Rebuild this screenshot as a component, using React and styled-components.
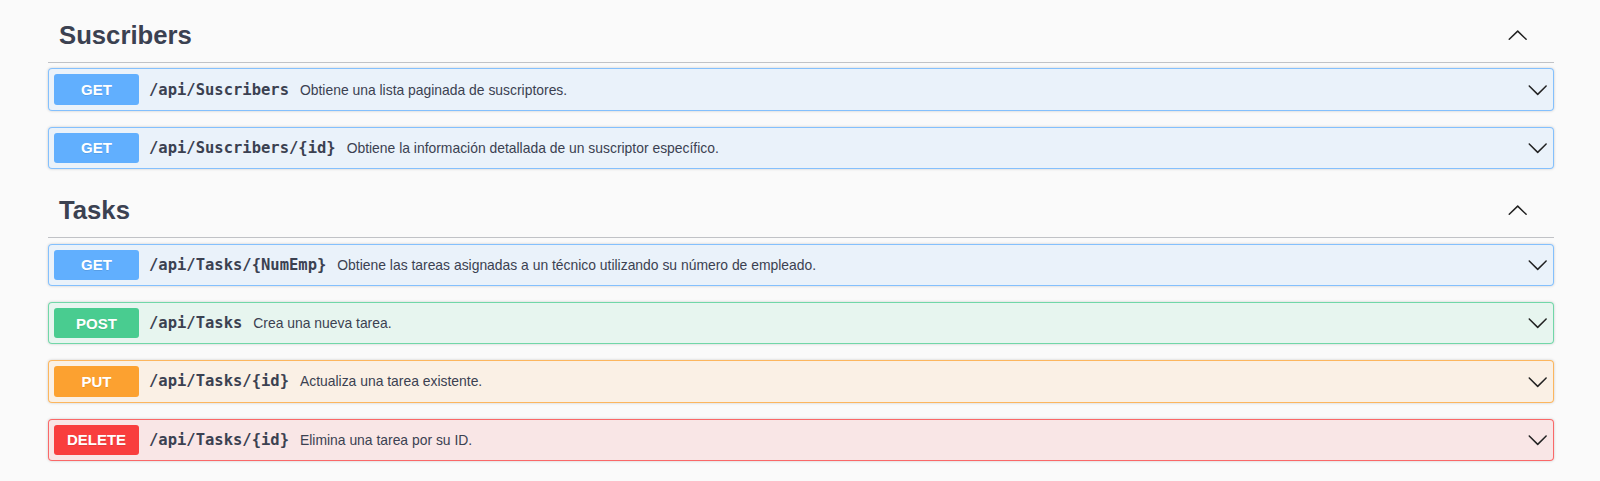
import React from "react";
import styled, { createGlobalStyle } from "styled-components";

const Global = createGlobalStyle`
  html, body { margin: 0; padding: 0; background: #fafafa; }
  body { font-family: "Liberation Sans", Arial, sans-serif; color: #3b4151; }
`;

const METHODS = {
  get: { main: "#61affe", border: "rgba(97,175,254,.75)", bg: "rgba(97,175,254,.1)" },
  post: { main: "#49cc90", border: "rgba(73,204,144,.75)", bg: "rgba(73,204,144,.1)" },
  put: { main: "#fca130", border: "rgba(252,161,48,.75)", bg: "rgba(252,161,48,.1)" },
  delete: { main: "#f93e3e", border: "rgba(249,62,62,.75)", bg: "rgba(249,62,62,.1)" },
};

const Page = styled.div`
  padding: 9.5px 46px 20px 48px;
`;

const Section = styled.section`
  margin-bottom: 0;
`;

const TagHeader = styled.div`
  display: flex;
  align-items: center;
  height: 33px;
  padding: 9.7px 20px 9.7px 10px;
  margin: 0 0 5.4px;
  border-bottom: 1px solid rgba(59, 65, 81, 0.3);
`;

const TagTitle = styled.h3`
  flex: 1;
  margin: 0;
  padding-left: 1px;
  font-family: "Liberation Sans", Arial, sans-serif;
  font-size: 25.7px;
  font-weight: 700;
  color: #3b4151;
  line-height: 1;
`;

const ExpandButton = styled.button`
  border: none;
  background: none;
  padding: 1px 6px;
  display: flex;
  align-items: center;
  color: #222;
  cursor: pointer;
`;

const Block = styled.div`
  display: flex;
  align-items: center;
  margin: 0 0 15.8px;
  padding: 5px;
  border: 1px solid ${(p) => METHODS[p.$m].border};
  border-radius: 4px;
  background: ${(p) => METHODS[p.$m].bg};
  box-shadow: 0 0 3px rgba(0, 0, 0, 0.19);
`;

const Method = styled.span`
  min-width: 85px;
  height: 30.5px;
  display: flex;
  align-items: center;
  justify-content: center;
  border-radius: 3px;
  background: ${(p) => METHODS[p.$m].main};
  color: #fff;
  font-family: "Liberation Sans", Arial, sans-serif;
  font-size: 15px;
  font-weight: 700;
  text-shadow: 0 1px 0 rgba(0, 0, 0, 0.1);
`;

const Path = styled.span`
  padding: 0 11px 0 10px;
  font-family: "DejaVu Sans Mono", monospace;
  font-size: 15.5px;
  font-weight: 700;
  color: #3b4151;
  white-space: nowrap;
`;

const Description = styled.span`
  flex: 1;
  font-family: "Liberation Sans", Arial, sans-serif;
  font-size: 13.9px;
  color: #3b4151;
`;

const ArrowButton = styled.button`
  border: none;
  background: none;
  padding: 0;
  display: flex;
  align-items: center;
  color: #222;
`;

const Chevron = ({ up }) => (
  <svg
    width="21.4"
    height="21.4"
    viewBox="0 0 20 20"
    fill="currentColor"
    style={up ? { transform: "rotate(180deg)" } : undefined}
  >
    <path d="M17.418 6.109c.272-.268.709-.268.979 0s.271.701 0 .969l-7.908 7.83c-.27.268-.707.268-.979 0l-7.908-7.83c-.27-.268-.27-.701 0-.969.271-.268.709-.268.979 0L10 13.25l7.418-7.141z" />
  </svg>
);

const sections = [
  {
    name: "Suscribers",
    ops: [
      { m: "get", path: "/api/Suscribers", desc: "Obtiene una lista paginada de suscriptores." },
      { m: "get", path: "/api/Suscribers/{id}", desc: "Obtiene la información detallada de un suscriptor específico." },
    ],
  },
  {
    name: "Tasks",
    ops: [
      { m: "get", path: "/api/Tasks/{NumEmp}", desc: "Obtiene las tareas asignadas a un técnico utilizando su número de empleado." },
      { m: "post", path: "/api/Tasks", desc: "Crea una nueva tarea." },
      { m: "put", path: "/api/Tasks/{id}", desc: "Actualiza una tarea existente." },
      { m: "delete", path: "/api/Tasks/{id}", desc: "Elimina una tarea por su ID." },
    ],
  },
];

export default function App() {
  return (
    <>
      <Global />
      <Page>
        {sections.map((s) => (
          <Section key={s.name}>
            <TagHeader>
              <TagTitle>{s.name}</TagTitle>
              <ExpandButton aria-label="collapse">
                <Chevron up />
              </ExpandButton>
            </TagHeader>
            {s.ops.map((o, i) => (
              <Block key={i} $m={o.m}>
                <Method $m={o.m}>{o.m.toUpperCase()}</Method>
                <Path>{o.path}</Path>
                <Description>{o.desc}</Description>
                <ArrowButton aria-label="expand">
                  <Chevron />
                </ArrowButton>
              </Block>
            ))}
          </Section>
        ))}
      </Page>
    </>
  );
}
